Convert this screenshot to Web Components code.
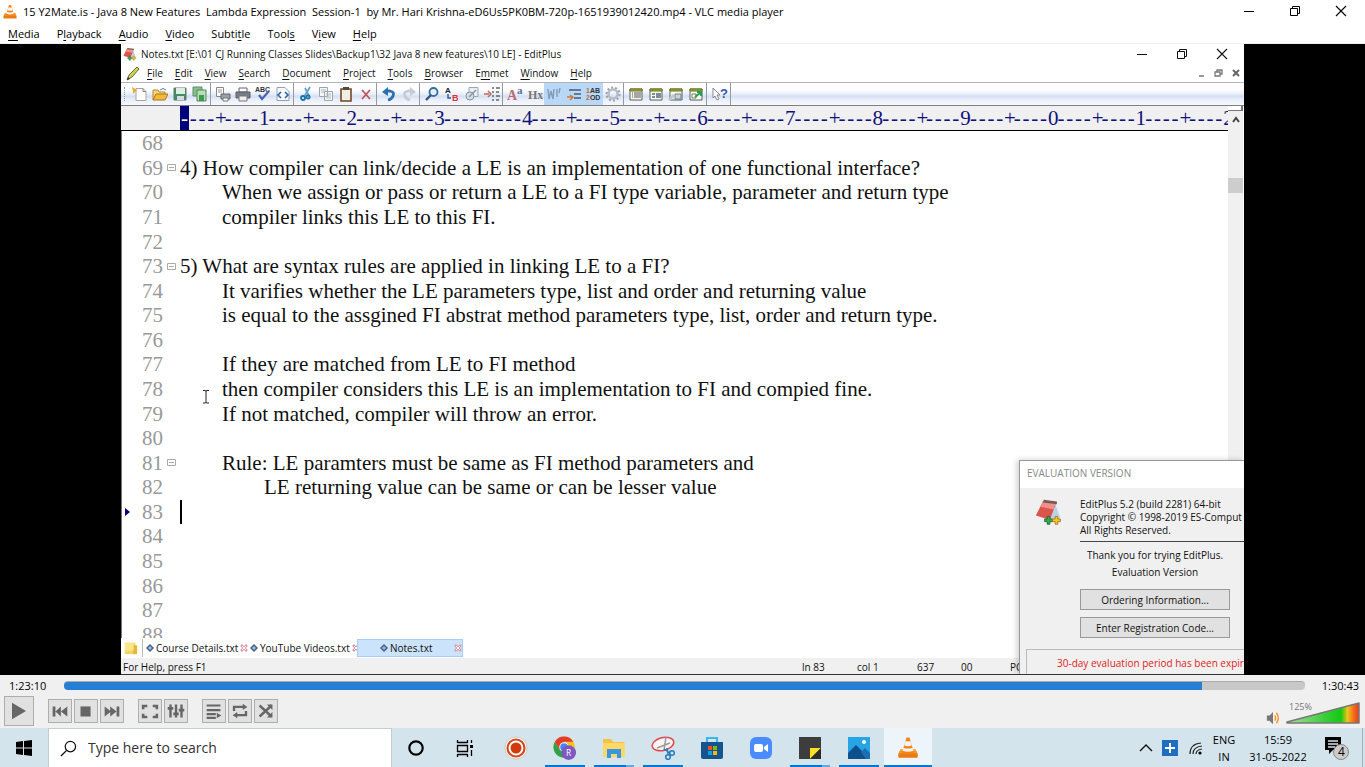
<!DOCTYPE html>
<html lang="en">
<head>
<meta charset="utf-8">
<title>VLC media player</title>
<style>
html,body{height:100%;margin:0}
body{font:11px/16px "Open Sans","Noto Sans",sans-serif;color:#000;background:#000;overflow:hidden}
</style>
</head>
<body>
<desktop-screen></desktop-screen>
<script>
const define = (name, css, html, setup) => {
  const t = document.createElement('template');
  t.innerHTML = `<style>*{box-sizing:border-box}button{font:inherit;color:inherit;background:none;border:0;padding:0;margin:0}${css}</style>${html}`;
  customElements.define(name, class extends HTMLElement {
    constructor() { super(); this.attachShadow({mode: 'open'}).append(t.content.cloneNode(true)); }
    connectedCallback() { if (setup) setup(this, this.shadowRoot); }
  });
};

const cone = `<path d="M3 24 6 18h20l3 6v4q0 1-1 1H4q-1 0-1-1z" fill="#e87b12"/><path d="M6 18h20l2 5H4z" fill="#ff9a2e"/><path d="M14 2h4l6 20q-8 4-16 0z" fill="#f58316"/><path d="M12.500 7h7l1.600 5.500q-5 2-10.200 0zM9.800 15.500q6 2.500 12.400 0l1.200 4q-7 3-14.800 0z" fill="#f3f3f3"/>`;
const pad = (c) => `<path d="m23 6 6 17-9 2-4-3z" fill="#b9d4ea"/><path d="M9 4 24 6 17 25 1 20z" fill="${c}"/><path d="M9 4 24 6 21 13 6 10z" fill="#f0908a"/><path d="M10 2 25 4v3L9 5z" fill="#7a5a55"/><path d="M14 21h3v3h3v3h-3v3h-3v-3h-3v-3h3z" fill="#34a853" stroke="#1d6b30"/><path d="M23 21h3v3h3v3h-3v3h-3v-3h-3v-3h3z" fill="#f4c430" stroke="#a67c12"/>`;
const sheet = (a) => `<path d="M2 3h12v11H2z" fill="#f7f9f0" stroke="#59605a"/><path d="M2 3h12v2H2z" fill="#a5ae28" stroke="#6d7420"/>${a}`;
const icons = {
  vlc: [32, cone], editplus: [32, pad('#dd544b')],
  pencil: [16, `<path d="m2 15 2-5 8-8 2 2-7 8z" fill="#cdd25a" stroke="#6b6a2a"/><path d="m2 15 1-3 2 2z" fill="#333"/>`],
  min: [12, `<path d="M1 6.500h10" stroke="currentColor"/>`],
  restore: [12, `<path d="M1.500 3.500h7v7h-7zM3.500 3.500v-2h7v7h-2" fill="none" stroke="currentColor"/>`],
  close: [12, `<path d="m1 1 10 10M11 1 1 11" stroke="currentColor" stroke-width="1.100"/>`],
  mclose: [12, `<path d="m3 3 6 6M9 3 3 9" stroke="#666" stroke-width="2"/>`],
  mrestore: [12, `<path d="M2 5h5v4H2zM4 5V3h5v4H7" fill="none" stroke="#777" stroke-width="1.300"/>`],
  mmin: [12, `<path d="M3 9h5" stroke="#777" stroke-width="1.500"/>`],
  new: [16, `<path d="M4 2.500h7l3 3v9H4z" fill="#fff" stroke="#a8a69a"/><path d="M11 2.500v3h3" fill="none" stroke="#88867a"/><path d="m0 1 5 3-4 4 0-3z" fill="#e9a92a"/>`],
  open: [16, `<path d="M1 14V4h5l1 2h6v3" fill="#f6d77a" stroke="#b5882b"/><path d="m1 14 3-6h12l-3 6z" fill="#f3b93c" stroke="#a8761c"/><path d="M8 4q3-3 6 0" stroke="#4e7fb5" fill="none"/>`],
  save: [16, `<path d="M2 2h12v12H2z" fill="#3f8d62" stroke="#66786c"/><path d="M4 2h9v6H4z" fill="#dfeee4"/><path d="M5 10h7v4H5z" fill="#d6dde0"/>`],
  saveall: [16, `<path d="M1 1h9v9H1z" fill="#8bbd8c" stroke="#5d8f68"/><path d="M5 4h9v11H5z" fill="#b9dcb6" stroke="#4d8a5b"/><path d="M7 9h5v6H7z" fill="#3f9a50"/>`],
  preview: [16, `<path d="M1.500 1.500h7v9h-7z" fill="#fff" stroke="#888"/><path d="M3 4h4M3 6h4" stroke="#999"/><path d="M6 8h9v5H6z" fill="#9aa0a7" stroke="#666"/><path d="M8 12h5v3H8z" fill="#fff" stroke="#777"/>`],
  print: [16, `<path d="M4 2h8v4H4z" fill="#fff" stroke="#666"/><path d="M1 6h14v6H1z" fill="#777c86" stroke="#5b5f68"/><path d="M4 10h8v5H4z" fill="#eee" stroke="#777"/>`],
  spell: [16, `<text x="0" y="6" font-size="7" font-weight="700" fill="#333">ABC</text><path d="m4 9 3 4 7-8" fill="none" stroke="#4763b5" stroke-width="2.200"/>`],
  html: [16, `<path d="M2 1.500h8l4 4v9H2z" fill="#f5f8fc" stroke="#97a1ad"/><path d="m6 6-3 3 3 3M10 6l3 3-3 3" fill="none" stroke="#2b66ad" stroke-width="1.600"/>`],
  cut: [16, `<path d="M12 1 6 11M7 2l4 8" stroke="#6ca0c0" stroke-width="1.800"/><circle cx="5" cy="12" r="2" fill="none" stroke="#1771a8" stroke-width="1.800"/><circle cx="10" cy="11" r="1.600" fill="none" stroke="#1771a8" stroke-width="1.800"/>`],
  copy: [16, `<path d="M1.500 1.500h8v9h-8zM6.500 5.500h8v9h-8z" fill="#f4f6f8" stroke="#a0a5ac"/><path d="M3 4h5M3 6h3M8 8h5M8 10h5M8 12h5" stroke="#abb"/>`],
  paste: [16, `<path d="M3 3h10v12H3z" fill="#f2eee3" stroke="#70482a" stroke-width="1.600"/><path d="M5 1h6v3H5z" fill="#55483e"/>`],
  del: [16, `<path d="m4 4 8 9M12 4l-8 9" stroke="#c2555a" stroke-width="1.800"/>`],
  undo: [16, `<path d="M5 5h4q5 1 3 5-1 3-5 4" fill="none" stroke="#2b6fae" stroke-width="2.800"/><path d="M1 6 7 1v9z" fill="#2b6fae"/>`],
  redo: [16, `<path d="M11 5H7q-5 1-3 5 1 3 5 4" fill="none" stroke="#c4ccd4" stroke-width="2.800"/><path d="m15 6-6-5v9z" fill="#c4ccd4"/>`],
  find: [16, `<circle cx="9.500" cy="6" r="4" fill="#e3effa" stroke="#376d9b" stroke-width="1.800"/><path d="m2 14 5-5" stroke="#33547a" stroke-width="2.400"/>`],
  replace: [16, `<text x="1" y="7" font-size="8" font-weight="700" fill="#223">A</text><text x="8" y="15" font-size="9" font-weight="700" fill="#d33">B</text><path d="M4 8v4h3" fill="none" stroke="#2c5f9f" stroke-width="1.500"/>`],
  findfiles: [16, `<path d="M5 1.500h9v9H5z" fill="#e9eef3" stroke="#9ea7af"/><circle cx="6" cy="10" r="4" fill="#d4dfe8" stroke="#8692a0"/><path d="m5 11 7-7" stroke="#8795a2" stroke-width="1.500"/>`],
  goto: [16, `<path d="M0 8h5M4 5l3 3-3 3" fill="none" stroke="#c06b59" stroke-width="1.500"/><path d="M8 2h2M12 2h4M8 6h2M12 6h3M8 10h2M12 10h4M8 14h2M12 14h3" stroke="#666" stroke-width="1.400"/>`],
  font: [16, `<text x="0" y="14" font-size="14" font-family="Liberation Serif" font-weight="700" fill="#b96a74">A</text><text x="10" y="8" font-size="11" font-family="Liberation Serif" font-weight="700" fill="#5b719b">a</text>`],
  hex: [16, `<text x="1" y="13" font-size="12" font-family="Liberation Serif" font-weight="700" fill="#777">Hx</text>`],
  wrap: [16, `<path d="m2 3 1 10 2-8 2 8 1-10M11 3v8M14 2l-1 5" fill="none" stroke="#819bb8" stroke-width="1.400"/>`],
  indent: [16, `<path d="M3 4h12M8 8h7M8 12h7" stroke="#445b78" stroke-width="1.500"/><path d="M1 11h5M4 9l3 2-3 3" fill="none" stroke="#d67836" stroke-width="1.400"/>`],
  lines: [16, `<text x="0" y="7" font-size="7" font-weight="700" fill="#c76a35">1<tspan fill="#333">AB</tspan></text><text x="0" y="14" font-size="7" font-weight="700" fill="#c76a35">2<tspan fill="#333">OD</tspan></text>`],
  gear: [16, `<circle cx="8" cy="8" r="4.500" fill="none" stroke="#b7bec5" stroke-width="2.600"/><circle cx="8" cy="8" r="6.500" fill="none" stroke="#9aa2aa" stroke-width="2" stroke-dasharray="2 2"/>`],
  p1: [16, sheet('<path d="M4 7h1M6 7h7M4 9h1M6 9h7M4 11h1M6 11h7" stroke="#555"/>')],
  p2: [16, sheet('<path d="M4 7h3v2H4zM4 10h3v2H4zM8 7h5v5H8z" fill="#7c8b9a"/>')],
  p3: [16, sheet('<path d="M7 8h6v5H7z" fill="#c8d4de" stroke="#6f7e8c"/><path d="m1 14 5-5" stroke="#c0c5cb" stroke-width="3"/>')],
  p4: [16, sheet('<path d="M4 8h4v4H4z" fill="#fff" stroke="#777"/><path d="m7 11 5-4M9 6h4v4" fill="none" stroke="#21a052" stroke-width="2"/>')],
  help: [16, `<path d="m1 2 7 7-3 0 2 4-2 1-2-4-2 2z" fill="#fff" stroke="#888"/><text x="8" y="12" font-size="13" font-weight="700" fill="#3556a8">?</text>`],
  folder: [16, `<path d="M1 2h12v13H1z" fill="#f3d564"/><path d="M10 5h5v10h-5z" fill="#e3b83a"/><path d="M1 2h10v9H1z" fill="#f9e689"/>`],
  diamond: [8, `<path d="m4 0 4 4-4 4-4-4z" fill="#465d86"/><path d="m4 2 2 2-2 2-2-2z" fill="#9cc0dd"/>`],
  tabx: [8, `<path d="m1 1 6 6M7 1 1 7" stroke="#dc9aa5" stroke-width="2.500"/><path d="m2 2 4 4M6 2 2 6" stroke="#fff" stroke-width="1"/>`],
  play: [24, `<path d="m6 5 12 7-12 7z" fill="#666"/>`],
  prev: [24, `<path d="M4 7h3v11H4zM13 7v11l-6-5.500zM20 7v11l-7-5.500z" fill="#666"/>`],
  stop: [24, `<path d="M6 7h11v11H6z" fill="#666"/>`],
  next: [24, `<path d="M17 7h3v11h-3zM4 7l7 5.500L4 18zM10 7l7 5.500-7 5.500z" fill="#666"/>`],
  full: [24, `<path d="M4.500 10V6.500H9M15 6.500h4.500V10M19.500 15v3.500H15M9 18.500H4.500V15" fill="none" stroke="#666" stroke-width="2.800"/>`],
  mixer: [24, `<path d="M6 5v14M12 5v14M18 5v14" stroke="#666" stroke-width="2.600"/><path d="M3 9h6M9 15h6M15 11h6" stroke="#666" stroke-width="3"/>`],
  list: [24, `<path d="M4 6h15M4 11h15M4 15.500h10M4 19.500h10" stroke="#666" stroke-width="2.400"/><path d="m15 14 5 3-5 3z" fill="#666"/>`],
  loop: [24, `<path d="M5.500 12V7.500H16M18.500 12v4.500H8" fill="none" stroke="#666" stroke-width="2.600"/><path d="m15 4 5 3.500-5 3.500zM9 13l-5 3.500L9 20z" fill="#666"/>`],
  shuffle: [24, `<path d="m5 6 13 12M5 18 18 6" stroke="#666" stroke-width="2.600"/><path d="M13 5h6v6zM13 19h6v-6z" fill="#666"/>`],
  speaker: [16, `<path d="M1 5h3l4-4v14l-4-4H1z" fill="#777"/><path d="M10 5q2 3 0 6M12 2q4 6 0 12" fill="none" stroke="#f79520" stroke-width="1.600"/>`],
  windows: [16, `<path d="m0 2 7-1v6.500H0zM8 .900 16 0v7.500H8zM0 8.500h7V15l-7-1zM8 8.500h8V16l-8-1z"/>`],
  search: [18, `<circle cx="11" cy="7" r="5.500" fill="none" stroke="#111" stroke-width="1.300"/><path d="m7 11-6 6" stroke="#111" stroke-width="1.400"/>`],
  cortana: [24, `<circle cx="12" cy="12" r="6.700" fill="none" stroke="#000" stroke-width="2.200"/>`],
  taskview: [24, `<path d="M4.500 7V4M14.500 7V4M4.500 6.500h10M4.500 9.500h10v6h-10zM4.500 21v-3M14.500 21v-3M4.500 18.500h10M18.500 4v3M18.500 14v6" fill="none" stroke="#000" stroke-width="1.300"/><path d="M17 9h3v3h-3z"/>`],
  record: [24, `<circle cx="12" cy="12" r="11" fill="#fff" stroke="#b8a8a0" stroke-width=".600"/><circle cx="12" cy="12" r="8.500" fill="none" stroke="#d84816" stroke-width="2.200"/><circle cx="12" cy="12" r="5.500" fill="#d03a0e"/>`],
  chrome: [26, `<circle cx="12" cy="12" r="11.500" fill="#fbc116"/><path d="M2 6.300A11.500 11.500 0 0 1 22 6.300H12L7 15z" fill="#e33b2e"/><path d="M2 6.300A11.500 11.500 0 0 0 12 23.500l5-8.500H7z" fill="#2ba24c"/><circle cx="12" cy="12" r="5.200" fill="#fff"/><circle cx="12" cy="12" r="4.200" fill="#4285f4"/><circle cx="17" cy="18" r="8" fill="#7e57c2"/><text x="14" y="21.500" font-size="9" font-family="Open Sans" fill="#fff">R</text>`],
  explorer: [24, `<path d="M1 3h8l2 3h11v15H1z" fill="#f5c242"/><path d="M1 7h22v14H1z" fill="#ffd869"/><path d="M5 13h14v9h-4v-4H9v4H5z" fill="#3b96dc"/>`],
  snip: [24, `<ellipse cx="12" cy="8" rx="11" ry="6.500" fill="#f8f4f4" stroke="#e0484c" stroke-width="1.500" transform="rotate(-14 12 8)"/><path d="M15 1l-2 13M6 12l13-5" stroke="#999" stroke-width="1.500"/><path d="m13 13 6 4M16 12l1 6" stroke="#2c7ab8" stroke-width="1.500"/><circle cx="21" cy="17" r="2.300" fill="none" stroke="#267cc0" stroke-width="1.600"/><circle cx="17" cy="21" r="2.300" fill="none" stroke="#267cc0" stroke-width="1.600"/>`],
  store: [24, `<path d="M7 7V2h10v5" fill="none" stroke="#39b6ee" stroke-width="2"/><path d="M1 6h22v15q0 2-2 2H3q-2 0-2-2z" fill="#16538f"/><path d="M8 10h4v4H8z" fill="#f25022"/><path d="M13 10h4v4h-4z" fill="#7fba00"/><path d="M8 15h4v4H8z" fill="#00a4ef"/><path d="M13 15h4v4h-4z" fill="#ffb900"/>`],
  zoom: [24, `<rect x="1" y="1" width="22" height="22" rx="6" fill="#4a8cff"/><rect x="5" y="8" width="9" height="8" rx="2" fill="#fff"/><path d="m15 11 4-3v8l-4-3z" fill="#fff"/>`],
  sticky: [24, `<path d="M1 1h22v22H1z" fill="#3d3d3d"/><path d="M12 12h11l-11 11z" fill="#ffdf22"/><path d="m23 12-11 11h11z" fill="#2c2c2c"/>`],
  photos: [24, `<path d="M1 1h22v22H1z" fill="#25a5e5"/><path d="m1 17 8-8 14 14H1z" fill="#0e4f8c"/><path d="m14 16 4-4 5 5v6h-4z" fill="#1d6fb5"/><circle cx="17" cy="6" r="2" fill="#fff"/>`],
  up: [16, `<path d="m2 11 6-6 6 6" fill="none" stroke="#111" stroke-width="1.400"/>`],
  plus: [16, `<path d="M0 0h16v16H0z" fill="#1f6dc1"/><path d="M8 3v10M3 8h10" stroke="#fff" stroke-width="1.800"/>`],
  wifi: [16, `<g fill="none" stroke="#222" stroke-width="1.200"><path d="M2 14Q2 4 13 3M5 14q0-7 9-8M8 14q0-4 6-5"/></g><circle cx="12" cy="13" r="1.600"/>`],
  note: [26, `<path d="M1 2h16v13H9l-4 4v-4H1z"/><path d="M4 6h10M4 9h10M4 12h7" stroke="#d4e3ec" stroke-width="1.300"/><circle cx="17" cy="17" r="7.500" fill="#ccc" stroke="#888"/><text x="14" y="21" font-size="12" font-family="Open Sans" fill="#000">4</text>`],
  chev: [12, `<path d="m3 8 3-4 3 4" fill="none" stroke="#444" stroke-width="2"/>`],
  fold: [9, `<path d="M.500 1.500h8v6h-8zM2 4.500h5" fill="none" stroke="#aaa"/>`],
  ibeam: [16, `<path d="M5 1.500h2q1 0 1 1V13q0 1-1 1H5M11 1.500H9q-1 0-1 1M11 14H9q-1 0-1-1" fill="none" stroke="#222" stroke-width="1"/>`]
};
define('ui-icon', ':host{display:block;flex:none;width:16px;height:16px}svg{display:block;width:100%;height:100%;font-family:"Liberation Sans",sans-serif}', '<svg aria-hidden="true"></svg>', (el, r) => {
  const [n, body] = icons[el.getAttribute('name')];
  const s = r.querySelector('svg'); s.setAttribute('viewBox', `0 0 ${n} ${n}`); s.innerHTML = body;
});

define('menu-list', ':host{display:block}nav{display:flex;height:100%;align-items:center;gap:var(--gap,17px)}button{text-underline-offset:2px}', '<nav></nav>', (el, r) => {
  r.querySelector('nav').innerHTML = el.getAttribute('items').split(' ').map(w => `<button>${w.replace(/_(.)/, '<u>$1</u>')}</button>`).join('');
});

define('player-header', `
:host{display:block;background:#fff;border-bottom:1px solid #f0f0f0}
.title{display:flex;align-items:center;height:24px;padding:0 18px 0 2px;white-space:pre}
h1{font:inherit;margin:0 auto 0 5px}
.c{display:flex;gap:34px;align-items:center;margin-top:-3px}.c ui-icon{width:12px;height:12px}
menu-list{height:19px;padding-left:8px}`,
`<div class="title"><ui-icon name="vlc"></ui-icon><h1>15 Y2Mate.is - Java 8 New Features  Lambda Expression  Session-1  by Mr. Hari Krishna-eD6Us5PK0BM-720p-1651939012420.mp4 - VLC media player</h1>
<div class="c"><button aria-label="Minimize"><ui-icon name="min"></ui-icon></button><button aria-label="Restore"><ui-icon name="restore"></ui-icon></button><button aria-label="Close"><ui-icon name="close"></ui-icon></button></div></div>
<menu-list items="_Media P_layback _Audio _Video Subti_tle Tool_s V_iew _Help"></menu-list>`);

define('tool-bar', `
:host{display:flex;height:24px;padding-left:3px;border-top:1px solid #b4b4b4;border-bottom:1px solid #808080;background:linear-gradient(#fdfdff 0 30%,#e9effb 50%,#d5dff2 60%,#e8eefa 75%,#f6f8fd)}
i{width:1px;margin:4px 3px 4px 0;border-left:1px dotted #999}
.g{display:flex;border-right:1px solid #999;padding-left:2px;align-items:stretch}
.w83{width:83px}.w43{width:43px}.w121{width:121px}.w24{width:24px}
button{flex:1;display:grid;place-items:center;min-width:0}button[aria-pressed]{background:#b9d8f7}
`, '<i></i>', (el, r) => {
  const groups = [['w83','new open save saveall'],['w83','preview print spell html'],['w83','cut copy paste del'],['w43','undo redo'],['w83','find replace findfiles goto'],['w121','font hex wrap indent lines gear'],['w83','p1 p2 p3 p4'],['w24','help']];
  for (const [w, list] of groups) r.innerHTML += `<div class="g ${w}">${list.split(' ').map(n => `<button aria-label="${n}"${/wrap|indent|lines/.test(n) ? ' aria-pressed="true"' : ''}><ui-icon name="${n}"></ui-icon></button>`).join('')}</div>`;
});

define('column-ruler', `
:host{display:block;overflow:hidden;height:25px;background:#f0f0f0;border-bottom:1px solid #000;padding-left:59px;color:#10107c;font:21px/24px "Liberation Serif",serif}
div{display:grid;grid-template-columns:repeat(120,1fr);margin-right:-4px;text-align:center}
span:first-child{background:#00007c;color:#fff}span{min-width:0}`, '<div></div>', (el, r) => {
  r.querySelector('div').innerHTML = [...'----+----1----+----2----+----3----+----4----+----5----+----6----+----7----+----8----+----9----+----0----+----1----+----2'].map(c => `<span>${c}</span>`).join('');
});

define('code-line', `
:host{display:grid;grid-template-columns:41px 17px 1fr;align-items:center;position:relative;min-height:0;white-space:pre;font:21px/24px "Liberation Serif",serif}
.n{color:#999;text-align:right}ui-icon{width:9px;height:9px;justify-self:center}ui-icon[hidden]{visibility:hidden;display:block}
:host([t="1"]) .t{padding-left:42px}:host([t="2"]) .t{padding-left:84px}
:host([current]) .t{border-left:2px solid #000;height:24px}
:host([current])::before{content:"";position:absolute;left:3px;border:4px solid transparent;border-left:5px solid #00007c}`,
`<span class="n"></span><ui-icon name="fold"></ui-icon><span class="t"><slot></slot></span>`, (el, r) => {
  r.querySelector('.n').textContent = el.getAttribute('n');
  r.querySelector('ui-icon').hidden = !el.hasAttribute('fold');
});

define('scroll-bar', `
:host{display:flex;flex-direction:column;background:#f0f0f0;border-right:1px solid #fff}
.split{height:5px;border:1px solid #777;border-width:0 2px 1px 0;background:#fff}
ui-icon{width:12px;height:12px;align-self:center;margin-top:3px}
.thumb{height:15px;margin-top:52px;background:#cdcdcd}`, '<div class="split"></div><ui-icon name="chev"></ui-icon><div class="thumb"></div>');

define('evaluation-dialog', `
:host{display:block;background:#f0f0f0;border:1px solid #999;border-width:1px 0 0 1px;box-shadow:-2px 0 6px #0003;overflow:hidden;white-space:nowrap;line-height:13px;color:#111}
header{background:#fff;color:#888;height:27px;line-height:25px;padding-left:7px}
.main{display:grid;grid-template-columns:60px 1fr}
.main ui-icon{width:28px;height:28px;margin:10px 0 0 15px}
.top{padding:10px 0 4px;border-bottom:1px solid #444}
.mid{width:150px;display:flex;flex-direction:column;text-align:center;line-height:17px;padding-top:5px}
button{border:1px solid #999;background:#e1e1e1;height:21px;margin-top:7px;line-height:18px}.mid span+button{margin-top:8px}
.exp{margin:11px 0 0 6px;border:1px solid #bbb;border-right:0;color:#e01b1b;padding:7px 0 8px 30px}`,
`<header>EVALUATION VERSION</header><div class="main"><ui-icon name="editplus"></ui-icon><div><div class="top">EditPlus 5.2 (build 2281) 64-bit<br>Copyright © 1998-2019 ES-Comput<br>All Rights Reserved.</div><div class="mid"><span>Thank you for trying EditPlus.</span><span>Evaluation Version</span><button>Ordering Information...</button><button>Enter Registration Code...</button></div></div></div><div class="exp">30-day evaluation period has been expire</div>`);

define('editor-window', `
:host{display:flex;flex-direction:column;position:relative;overflow:hidden;background:#fff;border-bottom:1px solid #333;font-size:10px;color:#111}
.title{display:flex;align-items:center;height:20px;padding:0 16px 0 2px}h2{font:inherit;margin:0 auto 0 4px;white-space:nowrap}
.title ui-icon{width:14px;height:14px}.title button ui-icon{width:12px;height:12px}.c{display:flex;gap:28px}
.menu{display:flex;align-items:center;height:18px;padding:0 2px 0 4px;gap:6px}menu-list{--gap:12px;margin-right:auto}.mc{display:flex;gap:5px}.mc ui-icon{width:12px;height:12px}
.body{flex:1;min-height:0;display:grid;grid-template-columns:1fr 16px;grid-template-rows:auto 1fr;border-left:1px solid #777}
column-ruler{grid-column:1;margin-left:-1px}scroll-bar{grid-column:2;grid-row:1/3}
main{overflow:hidden;min-height:0;display:grid}
.lines{display:grid;grid-auto-rows:minmax(0,1fr);margin-bottom:-9px;min-height:0}
.tabs{display:flex;height:20px;align-items:center;background:#fff}
.tabs a{display:flex;align-items:center;gap:2px;color:#111;text-decoration:none;white-space:nowrap;height:18px}
.tabs>ui-icon{width:14px;height:14px;margin:0 4px 0 3px}.tabs a ui-icon{width:8px;height:8px}
.a1{width:108px;border-left:1px solid #bbb;padding:0 4px 0 3px}.a2{width:107px}
.tabs a span{flex:1}.tabs .on{width:106px;background:#cce4fb;border:1px solid #a9cdee;padding:0 0 0 22px}
footer{display:grid;grid-template-columns:679px 55px 60px 44px 49px 1fr;height:16px;background:#f0f0f0;line-height:19px;padding-left:2px}
evaluation-dialog{position:absolute;right:0;bottom:0;width:225px;height:214px}
.cursor{position:absolute;left:77px;top:345px}`,
`<div class="title"><ui-icon name="editplus"></ui-icon><h2>Notes.txt [E:\\01 CJ Running Classes Slides\\Backup1\\32 Java 8 new features\\10 LE] - EditPlus</h2><div class="c"><button aria-label="Minimize"><ui-icon name="min"></ui-icon></button><button aria-label="Restore"><ui-icon name="restore"></ui-icon></button><button aria-label="Close"><ui-icon name="close"></ui-icon></button></div></div>
<div class="menu"><ui-icon name="pencil"></ui-icon><menu-list items="_File _Edit _View _Search _Document _Project _Tools _Browser E_mmet _Window _Help"></menu-list><div class="mc"><button aria-label="Minimize document"><ui-icon name="mmin"></ui-icon></button><button aria-label="Restore document"><ui-icon name="mrestore"></ui-icon></button><button aria-label="Close document"><ui-icon name="mclose"></ui-icon></button></div></div>
<tool-bar></tool-bar>
<div class="body"><column-ruler></column-ruler><scroll-bar></scroll-bar><main><div class="lines">
<code-line n="68"></code-line>
<code-line n="69" fold>4) How compiler can link/decide a LE is an implementation of one functional interface?</code-line>
<code-line n="70" t="1">When we assign or pass or return a LE to a FI type variable, parameter and return type</code-line>
<code-line n="71" t="1">compiler links this LE to this FI.</code-line>
<code-line n="72"></code-line>
<code-line n="73" fold>5) What are syntax rules are applied in linking LE to a FI?</code-line>
<code-line n="74" t="1">It varifies whether the LE parameters type, list and order and returning value</code-line>
<code-line n="75" t="1">is equal to the assgined FI abstrat method parameters type, list, order and return type.</code-line>
<code-line n="76"></code-line>
<code-line n="77" t="1">If they are matched from LE to FI method</code-line>
<code-line n="78" t="1">then compiler considers this LE is an implementation to FI and compied fine.</code-line>
<code-line n="79" t="1">If not matched, compiler will throw an error.</code-line>
<code-line n="80"></code-line>
<code-line n="81" t="1" fold>Rule: LE paramters must be same as FI method parameters and</code-line>
<code-line n="82" t="2">LE returning value can be same or can be lesser value</code-line>
<code-line n="83" current></code-line>
<code-line n="84"></code-line><code-line n="85"></code-line><code-line n="86"></code-line><code-line n="87"></code-line><code-line n="88"></code-line>
</div></main></div>
<div class="tabs"><ui-icon name="folder"></ui-icon><a class="a1" href="#1"><ui-icon name="diamond"></ui-icon><span>Course Details.txt</span><ui-icon name="tabx"></ui-icon></a><a class="a2" href="#2"><ui-icon name="diamond"></ui-icon><span>YouTube Videos.txt</span><ui-icon name="tabx"></ui-icon></a><a class="on" href="#3"><ui-icon name="diamond"></ui-icon><span>Notes.txt</span><ui-icon name="tabx"></ui-icon></a></div>
<footer><span>For Help, press F1</span><span>ln 83</span><span>col 1</span><span>637</span><span>00</span><span>PC</span></footer>
<ui-icon class="cursor" name="ibeam"></ui-icon>
<evaluation-dialog></evaluation-dialog>`);

define('player-controls', `
:host{display:block;background:#f0f0f0;height:53px}
.seek{display:grid;grid-template-columns:59px 1fr 55px;gap:5px;align-items:center;height:21px}
time:first-child{padding-left:9px}time:last-child{text-align:right;padding-right:6px}
.seek input{appearance:none;margin:0;width:100%;height:9px;border-radius:4px;background:linear-gradient(90deg,#2580d5 91.700%,#c8c8c8 91.700%);border-top:1px solid #aaa}
input::-webkit-slider-thumb{appearance:none;width:1px;height:1px}
.row{display:flex;align-items:center;padding:0 5px 0 4px;height:30px}
button{width:24px;height:24px;border:1px solid #adadad;background:#e1e1e1;margin-right:2px}button ui-icon{width:22px;height:22px}
.play{width:30px;height:30px}.play ui-icon{width:28px;height:28px}.play,.e{margin-right:14px}
.vol{margin-left:auto;display:flex;align-items:flex-end;gap:6px;padding-top:4px}.vol ui-icon{width:14px;height:14px}
label{display:grid;width:74px;height:24px;position:relative}label svg,label input{grid-area:1/1;width:100%;height:100%;margin:0}label input{opacity:0}
label span{position:absolute;left:3px;top:0;font-size:9px;line-height:12px;color:#777}`,
`<div class="seek"><time>1:23:10</time><input type="range" aria-label="Position" value="92"><time>1:30:43</time></div>
<div class="row"><button class="play" aria-label="Play"><ui-icon name="play"></ui-icon></button><button aria-label="Previous"><ui-icon name="prev"></ui-icon></button><button aria-label="Stop"><ui-icon name="stop"></ui-icon></button><button class="e" aria-label="Next"><ui-icon name="next"></ui-icon></button><button aria-label="Fullscreen"><ui-icon name="full"></ui-icon></button><button class="e" aria-label="Settings"><ui-icon name="mixer"></ui-icon></button><button aria-label="Playlist"><ui-icon name="list"></ui-icon></button><button aria-label="Loop"><ui-icon name="loop"></ui-icon></button><button aria-label="Random"><ui-icon name="shuffle"></ui-icon></button>
<div class="vol"><ui-icon name="speaker"></ui-icon><label><svg viewBox="0 0 74 24"><defs><linearGradient id="v"><stop offset="0" stop-color="#a8dca0"/><stop offset=".600" stop-color="#2ccc2a"/><stop offset=".750" stop-color="#16c916"/><stop offset=".840" stop-color="#f0c419"/><stop offset=".930" stop-color="#f06a1e"/><stop offset="1" stop-color="#ee3a1e"/></linearGradient></defs><path d="M1 21 73 2v20H1z" fill="url(#v)" stroke="#777" stroke-width="1.500" stroke-linejoin="round"/></svg><input type="range" aria-label="Volume" max="125" value="125"><span>125%</span></label></div></div>`);

define('task-button', `
:host{display:grid;width:48px;flex:none;position:relative;margin-right:1px}
button{display:grid;place-items:center}ui-icon{width:24px;height:24px}
:host([running])::after,:host([active])::after{content:"";position:absolute;left:4px;right:4px;bottom:0;height:2px;background:#0078d7}
:host([multi])::after{background:linear-gradient(90deg,#0078d7 80%,#62aae3 80%)!important}
:host([active]){background:#eef5fa}:host([active])::after{left:0;right:0}`, '<button><ui-icon name="vlc"></ui-icon></button>', (el, r) => {
  const n = el.getAttribute('app'), b = r.querySelector('button'); b.setAttribute('aria-label', n);
  b.innerHTML = `<ui-icon name="${n}"></ui-icon>`;
});

define('task-bar', `
:host{display:flex;height:39px;background:#d4e4ec;line-height:17px}
.start{width:48px;display:grid;place-items:center}
.search{width:344px;display:flex;align-items:center;gap:11px;background:#fff;border:1px solid #c4cdd2;border-bottom:0;padding-left:11px}
.search ui-icon{width:17px;height:17px}
.search input{border:0;outline:0;padding:0;flex:1;min-width:0;font:14px/20px "Open Sans",sans-serif;background:none}.search input::placeholder{color:#333;opacity:1}
.apps{display:flex}.apps .tv{margin-right:3px}
.tray{margin-left:auto;display:flex;align-items:center;text-align:center}
.tray ui-icon{margin-right:8px}.tray ui-icon:nth-child(2){margin-right:10px}.lang{width:24px;margin-right:12px}.clock{width:60px;white-space:nowrap;margin-right:16px;display:flex;flex-direction:column;align-items:center}
.tray .note{width:26px;height:26px;margin:0 12px 0 0}.peek{width:3px;border-left:1px solid #9fb0ba;align-self:stretch}`,
`<button class="start" aria-label="Start"><ui-icon name="windows"></ui-icon></button>
<label class="search"><ui-icon name="search"></ui-icon><input placeholder="Type here to search" aria-label="Search"></label>
<div class="apps"><task-button app="cortana"></task-button><task-button class="tv" app="taskview"></task-button><task-button app="record"></task-button><task-button app="chrome" running></task-button><task-button app="explorer" running multi></task-button><task-button app="snip" running></task-button><task-button app="store"></task-button><task-button app="zoom"></task-button><task-button app="sticky" running multi></task-button><task-button app="photos" running></task-button><task-button app="vlc" active></task-button></div>
<div class="tray"><ui-icon name="up"></ui-icon><ui-icon name="plus"></ui-icon><ui-icon name="wifi"></ui-icon><div class="lang">ENG<br>IN</div><div class="clock"><span>15:59</span><span>31-05-2022</span></div><ui-icon class="note" name="note"></ui-icon><div class="peek"></div></div>`);

define('desktop-screen', `
:host{display:flex;flex-direction:column;height:100vh}
.video{flex:1;min-height:0;display:flex;background:#000;padding:0 121px}editor-window{flex:1;min-width:0}`,
`<player-header></player-header><div class="video"><editor-window></editor-window></div><player-controls></player-controls><task-bar></task-bar>`);
</script>
</body>
</html>
